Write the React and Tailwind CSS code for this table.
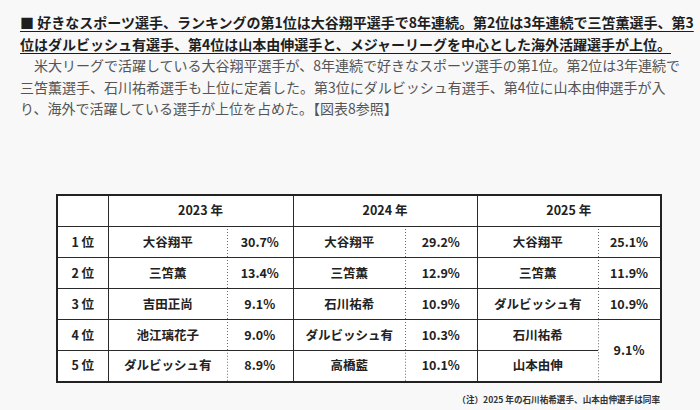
const rows = [
  { rank: '1 位', a: ['大谷翔平', '30.7%'], b: ['大谷翔平', '29.2%'], c: ['大谷翔平', '25.1%'] },
  { rank: '2 位', a: ['三笘薫', '13.4%'], b: ['三笘薫', '12.9%'], c: ['三笘薫', '11.9%'] },
  { rank: '3 位', a: ['吉田正尚', '9.1%'], b: ['石川祐希', '10.9%'], c: ['ダルビッシュ有', '10.9%'] },
  { rank: '4 位', a: ['池江璃花子', '9.0%'], b: ['ダルビッシュ有', '10.3%'], c: ['石川祐希', '9.1%'], span: true },
  { rank: '5 位', a: ['ダルビッシュ有', '8.9%'], b: ['高橋藍', '10.1%'], c: ['山本由伸', null] },
];

const cell = 'border border-[#2a2a2a] text-center align-middle';
const name = 'border-y border-l border-[#2a2a2a] text-center align-middle';
// dotted divider drawn on the left edge of the % cell
const pct =
  'border-y border-r border-[#2a2a2a] text-center align-middle bg-[linear-gradient(#6a6a6a_50%,transparent_50%)] bg-[length:1px_3px] bg-left bg-repeat-y';

export default function App() {
  return (
    <div
      className="h-[410px] w-[700px] overflow-hidden bg-[#f8f8f8]"
      style={{ fontFamily: '"Noto Sans CJK JP", "Noto Sans", sans-serif' }}
    >
      {/* lead text */}
      <div className="pl-[20px] pt-[12px] text-[14px] leading-[21.5px] whitespace-nowrap">
        <p className="font-bold text-[#1e1e1e] underline decoration-1 underline-offset-[3px]">
          ■ 好きなスポーツ選手、ランキングの第1位は大谷翔平選手で8年連続。第2位は3年連続で三笘薫選手、第3
          <br />
          位はダルビッシュ有選手、第4位は山本由伸選手と、メジャーリーグを中心とした海外活躍選手が上位。
        </p>
        <p className="text-[#555]">
          {'\u3000'}米大リーグで活躍している大谷翔平選手が、8年連続で好きなスポーツ選手の第1位。第2位は3年連続で
          <br />
          三笘薫選手、石川祐希選手も上位に定着した。第3位にダルビッシュ有選手、第4位に山本由伸選手が入
          <br />
          り、海外で活躍している選手が上位を占めた。【図表8参照】
        </p>
      </div>

      {/* ranking table */}
      <div className="ml-[56px] mt-[74px] w-[604px]">
        <table className="w-full table-fixed border-collapse border-2 border-[#222] bg-white text-[12.5px] font-bold text-[#222]">
          <colgroup>
            <col className="w-[51px]" />
            <col className="w-[119px]" />
            <col className="w-[66px]" />
            <col className="w-[112px]" />
            <col className="w-[72px]" />
            <col className="w-[121px]" />
            <col className="w-[63px]" />
          </colgroup>
          <thead>
            <tr className="h-[32px]">
              <th className={cell}></th>
              <th colSpan={2} className={cell}>2023 年</th>
              <th colSpan={2} className={cell}>2024 年</th>
              <th colSpan={2} className={cell}>2025 年</th>
            </tr>
          </thead>
          <tbody>
            {rows.map((r, i) => (
              <tr key={i} className="h-[31px]">
                <td className={cell}>{r.rank}</td>
                <td className={name}>{r.a[0]}</td>
                <td className={pct}>{r.a[1]}</td>
                <td className={name}>{r.b[0]}</td>
                <td className={pct}>{r.b[1]}</td>
                <td className={name}>{r.c[0]}</td>
                {r.c[1] && (
                  <td rowSpan={r.span ? 2 : 1} className={pct}>
                    {r.c[1]}
                  </td>
                )}
              </tr>
            ))}
          </tbody>
        </table>
        <p className="mt-[10px] text-right text-[8.6px] font-bold text-[#333]">
          （注）2025 年の石川祐希選手、山本由伸選手は同率
        </p>
      </div>
    </div>
  );
}
